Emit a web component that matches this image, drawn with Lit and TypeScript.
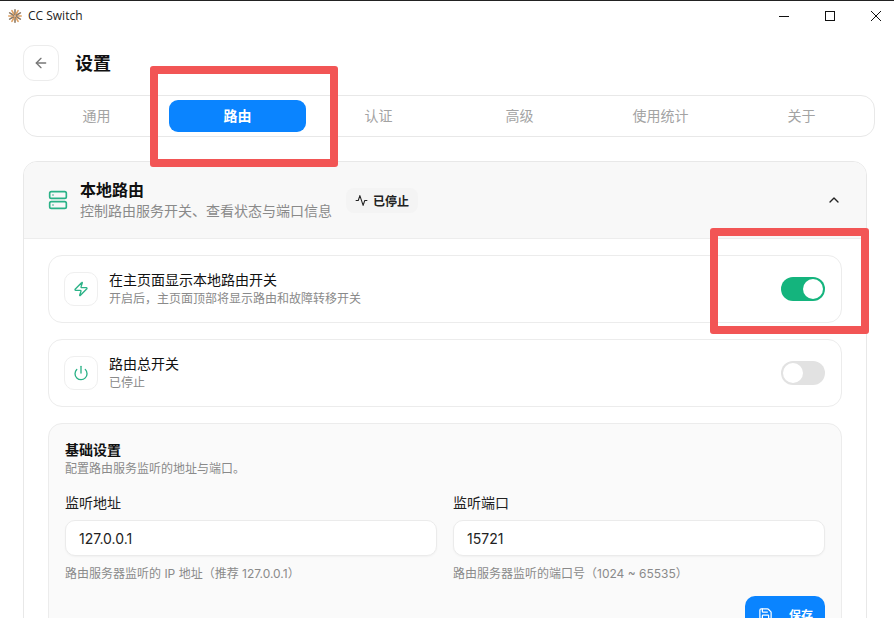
import { LitElement, css, html, svg } from "lit";
import { customElement, state } from "lit/decorators.js";

const stroke = (body: unknown, size = 16) => html`<svg
  width=${size}
  height=${size}
  viewBox="0 0 24 24"
  fill="none"
  stroke="currentColor"
  stroke-width="2"
  stroke-linecap="round"
  stroke-linejoin="round"
>${body}</svg>`;

const icons = {
  back: svg`<path d="m12 19-7-7 7-7"/><path d="M19 12H5"/>`,
  server: svg`<rect x="2" y="2" width="20" height="8" rx="2"/><rect x="2" y="14" width="20" height="8" rx="2"/><path d="M6 6h.01"/><path d="M6 18h.01"/>`,
  activity: svg`<path d="M22 12h-4l-3 9L9 3l-3 9H2"/>`,
  up: svg`<path d="m18 15-6-6-6 6"/>`,
  zap: svg`<path d="M4 14a1 1 0 0 1-.78-1.63l9.9-10.2a.5.5 0 0 1 .86.46l-1.92 6.02A1 1 0 0 0 13 10h7a1 1 0 0 1 .78 1.63l-9.9 10.2a.5.5 0 0 1-.86-.46l1.92-6.02A1 1 0 0 0 11 14z"/>`,
  power: svg`<path d="M12 2v10"/><path d="M18.4 6.6a9 9 0 1 1-12.77.04"/>`,
  save: svg`<path d="M15.2 3a2 2 0 0 1 1.4.6l3.8 3.8a2 2 0 0 1 .6 1.4V19a2 2 0 0 1-2 2H5a2 2 0 0 1-2-2V5a2 2 0 0 1 2-2z"/><path d="M17 21v-7a1 1 0 0 0-1-1H8a1 1 0 0 0-1 1v7"/><path d="M7 3v4a1 1 0 0 0 1 1h7"/>`,
};

const TABS = ["通用", "路由", "认证", "高级", "使用统计", "关于"];

@customElement("app-root")
export class AppRoot extends LitElement {
  @state() active = 1;
  @state() showToggle = true;
  @state() routerOn = false;

  static styles = css`
    :host {
      display: block;
      position: relative;
      height: 618px;
      overflow: hidden;
      background: #fff;
      color: #111;
      font-family: "Inter", "Noto Sans CJK SC", sans-serif;
    }

    .titlebar {
      display: flex;
      align-items: center;
      height: 29px;
      border-top: 1.5px solid #222;
      padding-left: 8px;
      font-family: "Open Sans", "Noto Sans CJK SC", sans-serif;
      font-size: 12px;
      color: #222;
    }
    .titlebar .logo {
      margin-right: 6px;
    }
    .winctl {
      display: flex;
      margin-left: auto;
      margin-right: -5px;
    }
    .winctl span {
      display: flex;
      justify-content: center;
      align-items: center;
      width: 46px;
      height: 28px;
      color: #111;
    }

    main {
      padding: 15px 18px 0 23px;
    }

    .head {
      display: flex;
      align-items: center;
      gap: 16px;
      height: 36px;
    }
    .back {
      display: flex;
      justify-content: center;
      align-items: center;
      width: 36px;
      height: 36px;
      box-sizing: border-box;
      padding: 0;
      border: 1px solid #ececec;
      border-radius: 11px;
      background: #fff;
      color: #777;
    }
    h1 {
      margin: 0 0 2px;
      font-size: 18px;
      font-weight: 700;
    }

    .tabs {
      display: grid;
      grid-template-columns: repeat(6, 137px);
      gap: 4px;
      width: 852px;
      box-sizing: border-box;
      margin-top: 14px;
      padding: 4px;
      border: 1px solid #e8e8e8;
      border-radius: 14px;
    }
    .tab {
      height: 32px;
      padding: 0 0 2px;
      border: 0;
      border-radius: 9px;
      background: none;
      color: #a3a3a3;
      font: inherit;
      font-size: 14px;
    }
    .tab.on {
      background: #0a84ff;
      color: #fff;
      font-weight: 700;
    }

    .card {
      margin-top: 24px;
      margin-right: 9px;
      border: 1px solid #e8e8e8;
      border-radius: 14px;
      overflow: hidden;
    }
    .card-head {
      display: flex;
      align-items: center;
      height: 77px;
      box-sizing: border-box;
      padding: 0 24px;
      border-bottom: 1px solid #ededed;
      background: #f8f8f8;
    }
    .card-icon {
      display: flex;
      color: #2bb287;
      margin-right: 12px;
    }
    .card-title {
      font-size: 16px;
      font-weight: 700;
      line-height: 22px;
    }
    .card-sub {
      font-size: 14px;
      line-height: 20px;
      color: #8a8a8a;
    }
    .badge {
      display: flex;
      align-items: center;
      gap: 5px;
      margin-left: 14px;
      height: 25px;
      padding: 0 9px;
      border-radius: 8px;
      background: #f4f4f4;
      font-size: 12px;
      font-weight: 700;
      color: #222;
    }
    .chev {
      display: flex;
      margin-left: auto;
      padding: 0;
      border: 0;
      background: none;
      color: #222;
    }

    .card-body {
      display: flex;
      flex-direction: column;
      gap: 16px;
      padding: 16px 24px;
    }

    .row {
      display: flex;
      align-items: center;
      gap: 11px;
      height: 68px;
      box-sizing: border-box;
      padding: 0 16px 0 15px;
      border: 1px solid #ececec;
      border-radius: 14px;
    }
    .row-icon {
      display: flex;
      justify-content: center;
      align-items: center;
      width: 34px;
      height: 34px;
      box-sizing: border-box;
      border: 1px solid #efefef;
      border-radius: 10px;
      color: #2bb287;
    }
    .row-title {
      font-size: 14px;
      line-height: 20px;
    }
    .row-desc {
      font-size: 12px;
      line-height: 17px;
      color: #8a8a8a;
    }
    .row-text {
      flex: 1;
      padding-bottom: 2px;
    }

    .switch {
      position: relative;
      width: 44px;
      height: 24px;
      padding: 0;
      border: 0;
      border-radius: 12px;
      background: #e2e2e2;
    }
    .switch i {
      position: absolute;
      top: 2px;
      left: 2px;
      width: 20px;
      height: 20px;
      border-radius: 50%;
      background: #fff;
    }
    .switch.on {
      background: #14b47d;
    }
    .switch.on i {
      left: 22px;
    }

    .panel {
      padding: 16px;
      border: 1px solid #ececec;
      border-radius: 14px;
      background: #fafafa;
    }
    .panel h2 {
      margin: 0;
      font-size: 14px;
      font-weight: 700;
      line-height: 20px;
    }
    .panel-sub {
      font-size: 12px;
      line-height: 17px;
      color: #8a8a8a;
    }
    .fields {
      display: grid;
      grid-template-columns: 1fr 1fr;
      gap: 16px;
      margin-top: 16px;
    }
    label {
      display: block;
      font-size: 14px;
      line-height: 20px;
      color: #222;
    }
    input {
      display: block;
      width: 100%;
      height: 36px;
      box-sizing: border-box;
      margin-top: 7px;
      padding: 0 13px;
      border: 1px solid #ebebeb;
      border-radius: 10px;
      outline: none;
      background: #fff;
      box-shadow: 0 1px 2px rgba(0, 0, 0, 0.04);
      color: #222;
      font: inherit;
      font-size: 14px;
    }
    .hint {
      margin-top: 9px;
      font-size: 12px;
      line-height: 17px;
      color: #8a8a8a;
    }
    .actions {
      display: flex;
      justify-content: flex-end;
      margin-top: 14px;
    }
    .save {
      display: flex;
      align-items: center;
      gap: 16px;
      width: 80px;
      height: 36px;
      box-sizing: border-box;
      padding: 0 13px;
      border: 0;
      border-radius: 10px;
      background: #0a84ff;
      color: #fff;
      font: inherit;
      font-size: 12px;
      font-weight: 700;
      white-space: nowrap;
    }
    .save svg {
      flex: none;
    }

    .mark {
      position: absolute;
      box-sizing: border-box;
      border: 8px solid #f25555;
      border-radius: 3px;
      pointer-events: none;
    }
    .mark.tab-mark {
      left: 150px;
      top: 66px;
      width: 188px;
      height: 101px;
    }
    .mark.toggle-mark {
      left: 710px;
      top: 228px;
      width: 159px;
      height: 106px;
    }
  `;

  render() {
    return html`
      <div class="titlebar">
        <svg class="logo" width="14" height="14" viewBox="0 0 14 14" stroke-linecap="round">
          ${Array.from({ length: 12 }, (_, i) => {
            const a = (i * Math.PI) / 6;
            return svg`<line
              x1=${7 + 1.5 * Math.cos(a)}
              y1=${7 + 1.5 * Math.sin(a)}
              x2=${7 + 6.2 * Math.cos(a)}
              y2=${7 + 6.2 * Math.sin(a)}
              stroke=${i % 2 ? "#8a7a68" : "#e0a060"}
              stroke-width="1.6"
            />`;
          })}
        </svg>
        CC Switch
        <div class="winctl">
          <span><svg width="10" height="10" viewBox="0 0 10 10" stroke="currentColor"><path d="M0 5.5h10"/></svg></span>
          <span><svg width="10" height="10" viewBox="0 0 10 10" fill="none" stroke="currentColor"><rect x=".5" y=".5" width="9" height="9"/></svg></span>
          <span><svg width="10" height="10" viewBox="0 0 10 10" stroke="currentColor"><path d="M0 0l10 10M10 0L0 10"/></svg></span>
        </div>
      </div>

      <main>
        <div class="head">
          <button class="back">${stroke(icons.back)}</button>
          <h1>设置</h1>
        </div>

        <div class="tabs">
          ${TABS.map(
            (t, i) => html`<button class="tab ${i === this.active ? "on" : ""}" @click=${() => (this.active = i)}>${t}</button>`
          )}
        </div>

        <section class="card">
          <div class="card-head">
            <span class="card-icon">${stroke(icons.server, 20)}</span>
            <div>
              <div class="card-title">本地路由</div>
              <div class="card-sub">控制路由服务开关、查看状态与端口信息</div>
            </div>
            <span class="badge">${stroke(icons.activity, 13)}已停止</span>
            <button class="chev">${stroke(icons.up, 16)}</button>
          </div>

          <div class="card-body">
            <div class="row">
              <span class="row-icon">${stroke(icons.zap, 16)}</span>
              <div class="row-text">
                <div class="row-title">在主页面显示本地路由开关</div>
                <div class="row-desc">开启后，主页面顶部将显示路由和故障转移开关</div>
              </div>
              <button class="switch ${this.showToggle ? "on" : ""}" @click=${() => (this.showToggle = !this.showToggle)}><i></i></button>
            </div>

            <div class="row">
              <span class="row-icon">${stroke(icons.power, 16)}</span>
              <div class="row-text">
                <div class="row-title">路由总开关</div>
                <div class="row-desc">已停止</div>
              </div>
              <button class="switch ${this.routerOn ? "on" : ""}" @click=${() => (this.routerOn = !this.routerOn)}><i></i></button>
            </div>

            <div class="panel">
              <h2>基础设置</h2>
              <div class="panel-sub">配置路由服务监听的地址与端口。</div>
              <div class="fields">
                <div>
                  <label>监听地址</label>
                  <input value="127.0.0.1" />
                  <div class="hint">路由服务器监听的 IP 地址（推荐 127.0.0.1）</div>
                </div>
                <div>
                  <label>监听端口</label>
                  <input value="15721" />
                  <div class="hint">路由服务器监听的端口号（1024 ~ 65535）</div>
                </div>
              </div>
              <div class="actions">
                <button class="save">${stroke(icons.save, 15)}保存</button>
              </div>
            </div>
          </div>
        </section>
      </main>

      <div class="mark tab-mark"></div>
      <div class="mark toggle-mark"></div>
    `;
  }
}
